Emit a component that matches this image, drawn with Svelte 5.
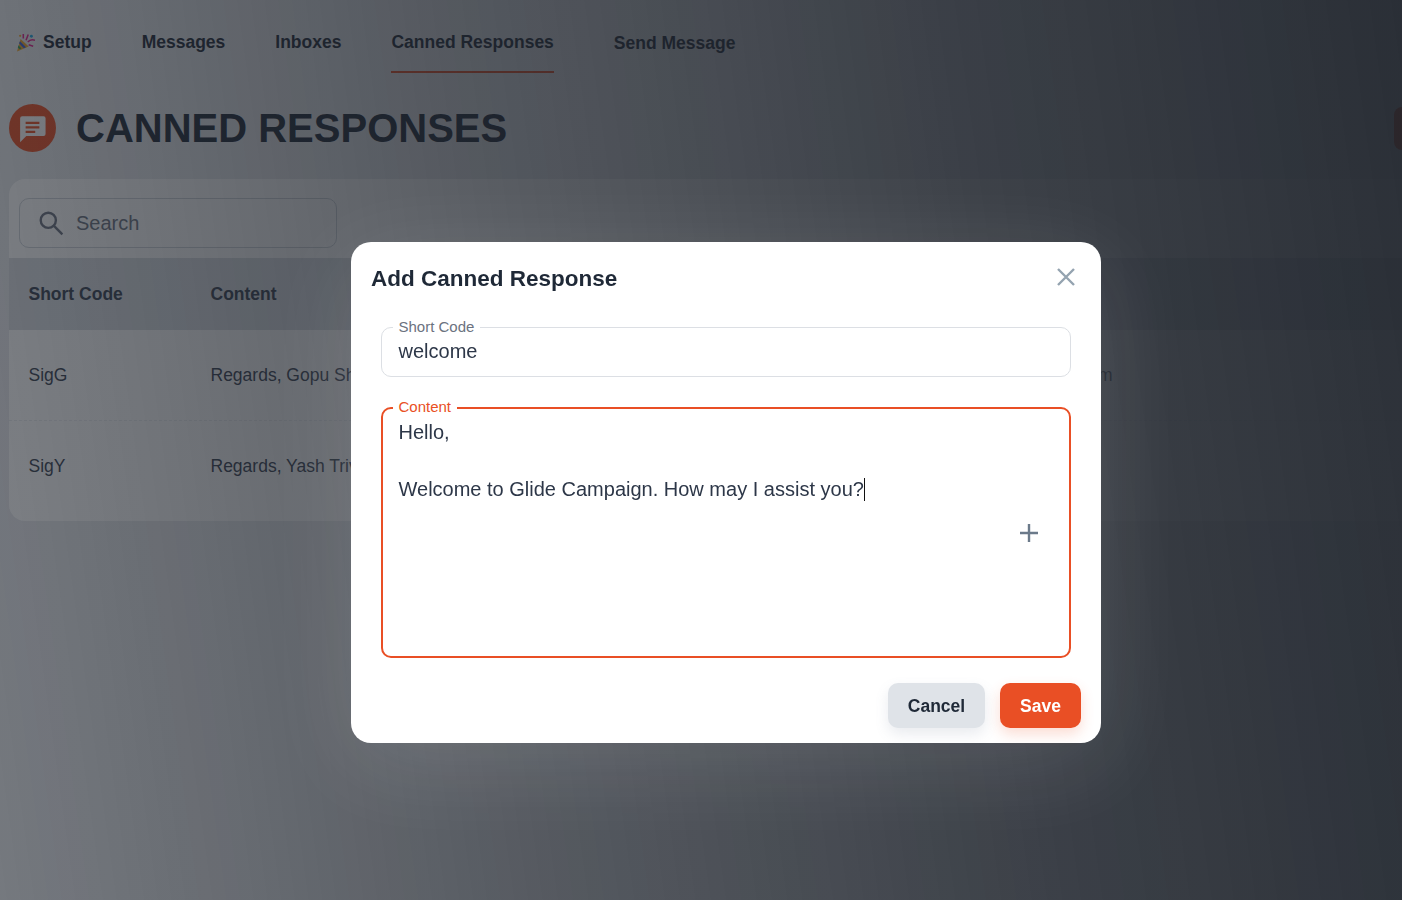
<script lang="ts">
  const tabs = ["Messages", "Inboxes", "Canned Responses"];
  const rows = [
    { code: "SigG", text: "Regards, Gopu Sharma", tail: "gopu@glidecampaign.com" },
    { code: "SigY", text: "Regards, Yash Trivedi", tail: "" }
  ];
</script>

<div class="page">
  <nav class="tabs">
    <a class="tab setup">
      <svg class="party" viewBox="0 0 20 20" width="18" height="18">
        <path d="M4 5.500 13 14 0 19.500z" fill="#f0a52a" />
        <path d="M3.300 8 10 14.600l-2.600 1.100L2.300 10.400z" fill="#3a5fd6" />
        <path d="M1.600 12.500 5 16l-2.200 1-1.900-1.900z" fill="#2f9e58" />
        <path d="M7 0v5M10 7l2.500-6.500M12 9c2-2.500 5-3 8-2M13 12l5 1.500" stroke="#e0218a" stroke-width="1.700" fill="none" />
        <circle cx="16" cy="2.500" r="1.600" fill="#1ea5e0" />
        <circle cx="3.500" cy="2" r="1.200" fill="#f0a52a" />
      </svg>
      Setup
    </a>
    {#each tabs as tab}
      <a class="tab" class:active={tab === "Canned Responses"}>{tab}</a>
    {/each}
    <a class="tab send">Send Message</a>
  </nav>

  <header class="title">
    <span class="badge">
      <svg viewBox="0 0 24 24" width="33" height="33">
        <path fill="#fff" d="M20 3H4.500A1.500 1.500 0 0 0 3 4.500V22l4.500-4.500H20a1.500 1.500 0 0 0 1.500-1.500V4.500A1.500 1.500 0 0 0 20 3z" />
        <path fill="#e94f25" d="M7 7h10v1.700H7zM7 10.300h10V12H7zM7 13.600h7v1.700H7z" />
      </svg>
    </span>
    <h1>CANNED RESPONSES</h1>
    <span class="add-btn"></span>
  </header>

  <section class="card">
    <div class="search">
      <svg viewBox="0 0 24 24" width="26" height="26" fill="none" stroke="#6b7280" stroke-width="2.200">
        <circle cx="9.500" cy="9.500" r="7" />
        <path d="m14.500 14.500 8 8" />
      </svg>
      <span>Search</span>
    </div>
    <div class="thead">
      <span class="c1">Short Code</span>
      <span>Content</span>
    </div>
    {#each rows as row}
      <div class="row">
        <span class="c1">{row.code}</span>
        <span class="c2"><span>{row.text}</span><span>{row.tail}</span></span>
      </div>
    {/each}
  </section>
</div>

<div class="overlay">
  <div class="modal">
    <div class="modal-head">
      <h2>Add Canned Response</h2>
      <button class="close" aria-label="Close">
        <svg viewBox="0 0 20 20" width="20" height="20" stroke="#94a3b0" stroke-width="2.400" fill="none">
          <path d="m2 2 16 16M18 2 2 18" />
        </svg>
      </button>
    </div>

    <div class="field short">
      <label>Short Code</label>
      <div class="value">welcome</div>
    </div>

    <div class="field content">
      <label>Content</label>
      <div class="value">
        <div>Hello,</div>
        <div>&nbsp;</div>
        <div>Welcome to Glide Campaign. How may I assist you?<i class="caret"></i></div>
      </div>
      <svg class="plus" viewBox="0 0 20 20" width="20" height="20" stroke="#6b7a8a" stroke-width="2.400" fill="none">
        <path d="M10 1v18M1 10h18" />
      </svg>
    </div>

    <div class="actions">
      <button class="btn cancel">Cancel</button>
      <button class="btn save">Save</button>
    </div>
  </div>
</div>

<style>
  :global(body) {
    margin: 0;
    font-family: "Liberation Sans", Arial, sans-serif;
    background: #e8eaed;
    overflow: hidden;
  }

  .page {
    height: 900px;
    color: #1f2937;
    overflow: hidden;
  }

  .tabs {
    display: flex;
    gap: 50px;
    padding: 14px 0 0 17px;
    height: 59px;
  }

  .tab {
    display: flex;
    align-items: center;
    gap: 8px;
    height: 57px;
    font-size: 17.500px;
    font-weight: 700;
  }

  .tab.active {
    border-bottom: 2px solid #e94f25;
  }

  .send {
    margin: 1px 0 0 10px;
  }

  .title {
    display: flex;
    align-items: center;
    height: 48px;
    margin-top: 31px;
    padding-left: 9px;
    position: relative;
  }

  .badge {
    width: 47px;
    height: 48px;
    border-radius: 50%;
    background: #e94f25;
    display: flex;
    align-items: center;
    justify-content: center;
  }

  h1 {
    margin: 0 0 0 20px;
    font-size: 40px;
    font-weight: 700;
    color: #1f2937;
  }

  .add-btn {
    position: absolute;
    left: 1394px;
    top: 3px;
    width: 40px;
    height: 43px;
    border-radius: 8px;
    background: #e94f25;
  }

  .card {
    margin: 27px 0 0 9px;
    height: 342px;
    box-sizing: border-box;
    padding-top: 19px;
    background: #fff;
    border-radius: 16px 0 0 16px;
  }

  .search {
    margin-left: 10px;
    height: 48px;
    width: 298px;
    border: 1px solid #cfd4da;
    border-radius: 10px;
    display: flex;
    align-items: center;
    gap: 12px;
    padding-left: 18px;
    font-size: 20px;
    color: #6b7280;
  }

  .thead {
    margin-top: 10px;
    height: 72px;
    display: flex;
    align-items: center;
    background: #d9dde2;
    font-size: 17.500px;
    font-weight: 700;
    color: #374151;
    padding-left: 19.500px;
  }

  .c1 {
    width: 182px;
    flex: none;
  }

  .row {
    height: 91px;
    display: flex;
    align-items: center;
    padding-left: 19.500px;
    font-size: 17.500px;
    color: #374151;
    border-bottom: 1px dashed #eceef1;
    box-sizing: border-box;
  }

  .row:last-child {
    border-bottom: 0;
  }

  .c2 {
    width: 902px;
    display: flex;
    justify-content: space-between;
    white-space: nowrap;
  }

  .overlay {
    position: fixed;
    inset: 0;
    display: flex;
    justify-content: center;
    padding: 242px 0 0 50px;
    background: linear-gradient(82deg, rgba(30, 35, 43, 0.57), rgba(30, 35, 43, 0.72) 35%, rgba(30, 35, 43, 0.86) 70%, rgba(30, 35, 43, 0.94));
  }

  .modal {
    width: 750px;
    height: 501px;
    box-sizing: border-box;
    background: #fff;
    border-radius: 20px;
    padding: 0 20px;
    box-shadow: 0 20px 90px rgba(255, 255, 255, 0.12);
  }

  .modal-head {
    height: 75px;
    display: flex;
    align-items: center;
    justify-content: space-between;
    padding-bottom: 1px;
    box-sizing: border-box;
  }

  h2 {
    margin: 0;
    font-size: 22.500px;
    font-weight: 700;
    color: #1f2937;
  }

  .close {
    border: 0;
    background: none;
    padding: 0;
    margin: 0 5px 5px 0;
    line-height: 0;
  }

  .field {
    margin: 10px 10px 0;
    position: relative;
    box-sizing: border-box;
    padding-left: 16.500px;
    font-size: 20px;
    color: #2d3748;
  }

  .field label {
    position: absolute;
    left: 10.500px;
    top: -10px;
    padding: 0 6px;
    background: #fff;
    font-size: 15px;
    line-height: 17px;
    color: #6b7280;
  }

  .short {
    height: 50px;
    border: 1px solid #dcdfe4;
    border-radius: 10px;
  }

  .short .value {
    line-height: 47px;
  }

  .content {
    margin-top: 30px;
    height: 251px;
    border: 2px solid #e94f25;
    border-radius: 10px;
    padding: 9px 0 0 15.500px;
    line-height: 28.500px;
  }

  .content label {
    left: 9.500px;
    top: -11px;
    color: #e94f25;
  }

  .caret {
    display: inline-block;
    width: 1px;
    height: 23px;
    background: #111;
    vertical-align: -5px;
  }

  .plus {
    position: absolute;
    right: 30px;
    top: 114px;
  }

  .actions {
    display: flex;
    justify-content: flex-end;
    gap: 15px;
    margin-top: 25px;
  }

  .btn {
    height: 45px;
    border: 0;
    border-radius: 10px;
    padding: 1px 0 0;
    font-family: inherit;
    font-size: 17.500px;
    font-weight: 700;
  }

  .cancel {
    width: 97px;
    background: #dfe3e8;
    color: #1f2937;
    box-shadow: 0 6px 14px rgba(100, 116, 139, 0.14);
  }

  .save {
    width: 81px;
    background: #e94f25;
    color: #fff;
    box-shadow: 0 6px 14px rgba(233, 79, 37, 0.2);
  }
</style>
